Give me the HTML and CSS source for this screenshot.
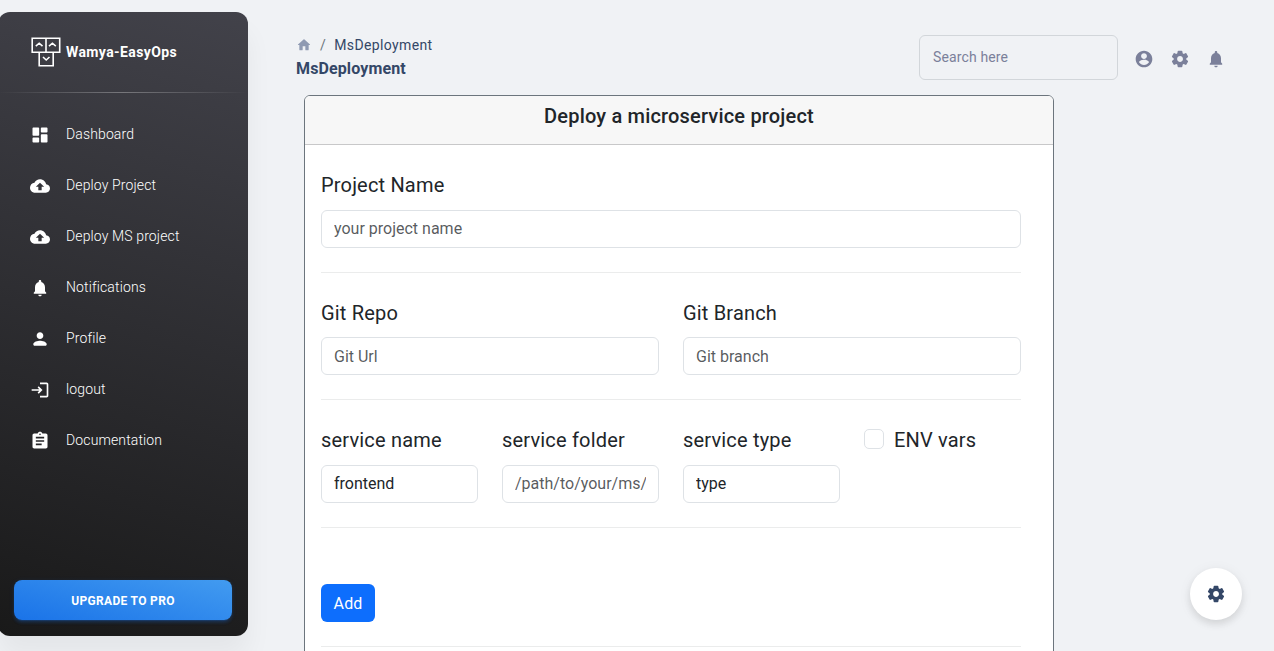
FILE: index.html
```html
<!DOCTYPE html>
<html lang="en">
<head>
<meta charset="utf-8">
<title>MsDeployment</title>
<link rel="stylesheet" href="styles.css">
</head>
<body>
<svg class="sprite" width="0" height="0">
  <symbol id="gear" viewBox="0 0 24 24"><path d="M19.5 12c0-.23-.01-.45-.03-.68l1.86-1.41c.4-.3.51-.86.26-1.3l-1.87-3.23c-.25-.44-.79-.62-1.25-.42l-2.15.91c-.37-.26-.76-.49-1.17-.68l-.29-2.31c-.06-.5-.49-.88-.99-.88h-3.73c-.51 0-.94.38-1 .88l-.29 2.31c-.41.19-.8.42-1.17.68l-2.15-.91c-.46-.2-1-.02-1.25.42L2.41 8.62c-.25.44-.14.99.26 1.3l1.86 1.41c-.02.22-.03.44-.03.67s.01.45.03.68l-1.86 1.41c-.4.3-.51.86-.26 1.3l1.87 3.23c.25.44.79.62 1.25.42l2.15-.91c.37.26.76.49 1.17.68l.29 2.31c.06.5.49.88.99.88h3.73c.5 0 .93-.38.99-.88l.29-2.31c.41-.19.8-.42 1.17-.68l2.15.91c.46.2 1 .02 1.25-.42l1.87-3.23c.25-.44.14-.99-.26-1.3l-1.86-1.41c.03-.23.04-.45.04-.68zm-7.46 3.5c-1.93 0-3.5-1.57-3.5-3.5s1.57-3.5 3.5-3.5 3.5 1.57 3.5 3.5-1.57 3.5-3.5 3.5z"/></symbol>
  <symbol id="bell" viewBox="0 0 24 24"><path d="M12 22c1.1 0 2-.9 2-2h-4c0 1.1.89 2 2 2zm6-6v-5c0-3.07-1.64-5.64-4.5-6.32V4c0-.83-.67-1.5-1.5-1.5s-1.5.67-1.5 1.5v.68C7.63 5.36 6 7.92 6 11v5l-1.290 1.290c-.63.63-.19 1.710.7 1.710h13.170c.89 0 1.340-1.080.71-1.710L18 16z"/></symbol>
  <symbol id="cloud" viewBox="0 0 24 24"><path d="M19.350 10.040C18.670 6.590 15.640 4 12 4 9.110 4 6.600 5.640 5.350 8.040 2.340 8.360 0 10.910 0 14c0 3.310 2.690 6 6 6h13c2.760 0 5-2.240 5-5 0-2.640-2.050-4.780-4.650-4.960zM14 13v4h-4v-4H7l5-5 5 5h-3z"/></symbol>
</svg>
<div class="app">
  <aside class="sidebar">
    <div class="brand">
      <svg class="logo" viewBox="0 0 30 31" fill="none" stroke="#fff" stroke-width="1.600"><path d="M1.200 1.200H28.700V15.200H1.200zM15 1.200V15.200M8.200 15.200V28.700H22.200V15.200M4.800 9.200L8.200 6.200 11.500 9.200M18 9.200L21.400 6.200 24.800 9.200M12 20L15.200 23 18.500 20"/></svg>
      <span>Wamya-EasyOps</span>
    </div>
    <div class="divider"></div>
    <nav class="menu">
      <a><svg viewBox="0 0 24 24"><path d="M4 13h6c.550 0 1-.450 1-1V4c0-.550-.450-1-1-1H4c-.550 0-1 .450-1 1v8c0 .550.450 1 1 1zm0 8h6c.550 0 1-.450 1-1v-4c0-.550-.450-1-1-1H4c-.550 0-1 .450-1 1v4c0 .550.450 1 1 1zm10 0h6c.550 0 1-.450 1-1v-8c0-.550-.450-1-1-1h-6c-.550 0-1 .450-1 1v8c0 .550.450 1 1 1zM13 4v4c0 .550.450 1 1 1h6c.550 0 1-.450 1-1V4c0-.550-.450-1-1-1h-6c-.550 0-1 .450-1 1z"/></svg><span>Dashboard</span></a>
      <a><svg><use href="#cloud"/></svg><span>Deploy Project</span></a>
      <a><svg><use href="#cloud"/></svg><span>Deploy MS project</span></a>
      <a><svg><use href="#bell"/></svg><span>Notifications</span></a>
      <a><svg viewBox="0 0 24 24"><path d="M12 12c2.210 0 4-1.790 4-4s-1.790-4-4-4-4 1.790-4 4 1.790 4 4 4zm0 2c-2.670 0-8 1.340-8 4v1c0 .550.450 1 1 1h14c.550 0 1-.450 1-1v-1c0-2.660-5.330-4-8-4z"/></svg><span>Profile</span></a>
      <a><svg viewBox="0 0 24 24"><path d="M10.500 7.500L9.100 8.900 11.200 11H2v2h9.200l-2.100 2.100 1.400 1.400L15 12l-4.500-4.500zM20 19h-8v2h8c1.100 0 2-.9 2-2V5c0-1.100-.9-2-2-2h-8v2h8v14z"/></svg><span>logout</span></a>
      <a><svg viewBox="0 0 24 24"><path d="M19 3h-4.180C14.400 1.840 13.300 1 12 1s-2.400.840-2.820 2H5c-1.100 0-2 .9-2 2v14c0 1.100.9 2 2 2h14c1.100 0 2-.9 2-2V5c0-1.100-.9-2-2-2zm-7 0c.550 0 1 .450 1 1s-.450 1-1 1-1-.450-1-1 .450-1 1-1zm2 14H7v-2h7v2zm3-4H7v-2h10v2zm0-4H7V7h10v2z"/></svg><span>Documentation</span></a>
    </nav>
    <button class="upgrade">UPGRADE TO PRO</button>
  </aside>
  <main class="main">
    <header class="topbar">
      <div class="heading">
        <div class="crumbs"><svg viewBox="0 0 24 24"><path d="M10 19v-5h4v5c0 .550.450 1 1 1h3c.550 0 1-.450 1-1v-7h1.700c.460 0 .680-.570.330-.870L12.670 3.600c-.380-.340-.960-.340-1.340 0l-8.360 7.530c-.340.300-.130.870.330.870H5v7c0 .550.450 1 1 1h3c.550 0 1-.450 1-1z"/></svg><span class="slash">/</span><span>MsDeployment</span></div>
        <h1>MsDeployment</h1>
      </div>
      <div class="tools">
        <input class="search" placeholder="Search here">
        <svg viewBox="0 0 24 24"><path fill-rule="evenodd" d="M12 2C6.480 2 2 6.480 2 12s4.480 10 10 10 10-4.480 10-10S17.520 2 12 2zm0 3c1.930 0 3.500 1.570 3.500 3.500S13.930 12 12 12 8.500 10.430 8.500 8.500 10.070 5 12 5zm0 14.200c-2.500 0-4.710-1.280-6-3.220.030-1.990 4-3.080 6-3.080 1.990 0 5.970 1.090 6 3.080-1.290 1.940-3.500 3.220-6 3.220z"/></svg>
        <svg><use href="#gear"/></svg>
        <svg><use href="#bell"/></svg>
      </div>
    </header>
    <section class="card">
      <h2 class="card-header">Deploy a microservice project</h2>
      <form class="card-body">
        <div class="row"><label class="field"><span>Project Name</span><input placeholder="your project name"></label></div>
        <div class="row"><label class="field"><span>Git Repo</span><input placeholder="Git Url"></label><label class="field"><span>Git Branch</span><input placeholder="Git branch"></label></div>
        <div class="row"><label class="field"><span>service name</span><input value="frontend"></label><label class="field"><span>service folder</span><input placeholder="/path/to/your/ms/"></label><label class="field"><span>service type</span><input value="type"></label><label class="check"><input type="checkbox"><span>ENV vars</span></label></div>
        <div class="actions"><button type="button" class="add">Add</button></div>
      </form>
    </section>
  </main>
</div>
<button class="fab" aria-label="Settings"><svg><use href="#gear"/></svg></button>
</body>
</html>
```
FILE: styles.css
```css
* { box-sizing: border-box; }
body {
  margin: 0;
  height: 651px;
  overflow: hidden;
  background: #f0f2f5;
  color: #212529;
  font-family: Roboto, "Liberation Sans", sans-serif;
}
input, button { font-family: inherit; }
svg { display: block; flex: none; fill: currentColor; }
.sprite { position: absolute; }
.app { display: flex; height: 651px; overflow: hidden; }

.sidebar {
  display: flex;
  flex: none;
  flex-direction: column;
  width: 250px;
  height: 624px;
  margin: 12px 0 0 -2px;
  border-radius: 12px;
  background: linear-gradient(195deg, #42424a, #191919);
  box-shadow: 0 20px 27px 0 rgba(0, 0, 0, .05);
  color: #fff;
}
.brand {
  display: flex;
  align-items: center;
  gap: 5px;
  height: 80px;
  padding-left: 33px;
  font-size: 14px;
  font-weight: 700;
  letter-spacing: .4px;
}
.logo { width: 30px; height: 31px; fill: none; }
.divider {
  height: 1px;
  background: linear-gradient(to right, rgba(255, 255, 255, 0), rgba(255, 255, 255, .3), rgba(255, 255, 255, 0));
}
.menu { padding-top: 15px; }
.menu a {
  display: flex;
  align-items: center;
  gap: 16px;
  height: 51px;
  padding-left: 32px;
  font-size: 14px;
  font-weight: 300;
  letter-spacing: .13px;
}
.menu svg { width: 20px; height: 20px; margin-top: 2px; }
.upgrade {
  height: 40px;
  margin: auto 16px 16px;
  padding: 2px 0 0;
  border: 0;
  border-radius: 8px;
  background: linear-gradient(195deg, #429bf0, #1a73e8);
  box-shadow: 0 3px 3px rgba(26, 115, 232, .15), 0 3px 1px -2px rgba(26, 115, 232, .2), 0 1px 5px rgba(26, 115, 232, .15);
  color: #fff;
  font-size: 12px;
  font-weight: 700;
  letter-spacing: .33px;
}

.main { flex: 1; padding: 35px 48px 0; }
.topbar { display: flex; justify-content: space-between; height: 60px; }
.heading { color: #344767; letter-spacing: .38px; }
.crumbs { display: flex; align-items: center; height: 20px; font-size: 14px; }
.crumbs svg { width: 16px; height: 16px; color: #8f9ab2; }
.slash { margin: 0 8px; color: #6c757d; }
.heading h1 { margin: 2px 0 0; font-size: 16px; line-height: 23px; font-weight: 700; letter-spacing: .12px; }
.tools { display: flex; gap: 16px; color: #7b809a; }
.tools svg { width: 20px; height: 20px; margin-top: 14px; }
.search {
  width: 199px;
  height: 45px;
  padding: 0 13px 2px;
  border: 1px solid #d2d6da;
  border-radius: 6px;
  background: transparent;
  font-size: 14px;
  letter-spacing: .13px;
}
.search::placeholder { color: #7b809a; opacity: 1; }

.card {
  width: 750px;
  height: 600px;
  margin-left: 8px;
  border: 1px solid #6c757d;
  border-radius: 6px;
  background: #fff;
}
.card-header {
  height: 49px;
  margin: 0;
  padding-top: 8px;
  border-bottom: 1px solid #c8c8c9;
  border-radius: 5px 5px 0 0;
  background: #f7f7f7;
  text-align: center;
  font-size: 20px;
  line-height: 24px;
  font-weight: 500;
  letter-spacing: .18px;
}
.card-body { width: 716px; padding: 25.2px 0 0 16px; }
.row {
  display: flex;
  gap: 24px;
  height: 102.7px;
  margin-bottom: 24.7px;
  border-bottom: 1px solid #ebecec;
}
.field, .check { flex: 1 1 0; min-width: 0; font-size: 20px; line-height: 30px; letter-spacing: .18px; }
.field span { display: block; margin-bottom: 9.7px; }
.field input {
  display: block;
  width: 100%;
  height: 38px;
  padding: 0 12px;
  border: 1px solid #dee2e6;
  border-radius: 6px;
  background: #fff;
  color: #212529;
  font-size: 16px;
}
.field input::placeholder { color: rgba(33, 37, 41, .75); opacity: 1; }
.check { display: flex; gap: 10px; }
.check input {
  appearance: none;
  width: 20px;
  height: 20px;
  margin: 4px 0 0;
  border: 1px solid #dee2e6;
  border-radius: 5px;
}
.actions { height: 94.6px; padding-top: 31.6px; border-bottom: 1px solid #ebecec; }
.add {
  width: 54px;
  height: 38px;
  padding: 1px 0 0;
  border: 0;
  border-radius: 6px;
  background: #0d6efd;
  color: #fff;
  font-size: 16px;
  letter-spacing: .1px;
}
.fab {
  position: fixed;
  right: 32px;
  bottom: 31px;
  display: grid;
  place-items: center;
  width: 52px;
  height: 52px;
  padding: 0;
  border: 0;
  border-radius: 50%;
  background: #fff;
  color: #344767;
  box-shadow: 0 4px 8px rgba(0, 0, 0, .1), 0 2px 14px rgba(0, 0, 0, .06);
}
.fab svg { width: 20px; height: 20px; }
```
